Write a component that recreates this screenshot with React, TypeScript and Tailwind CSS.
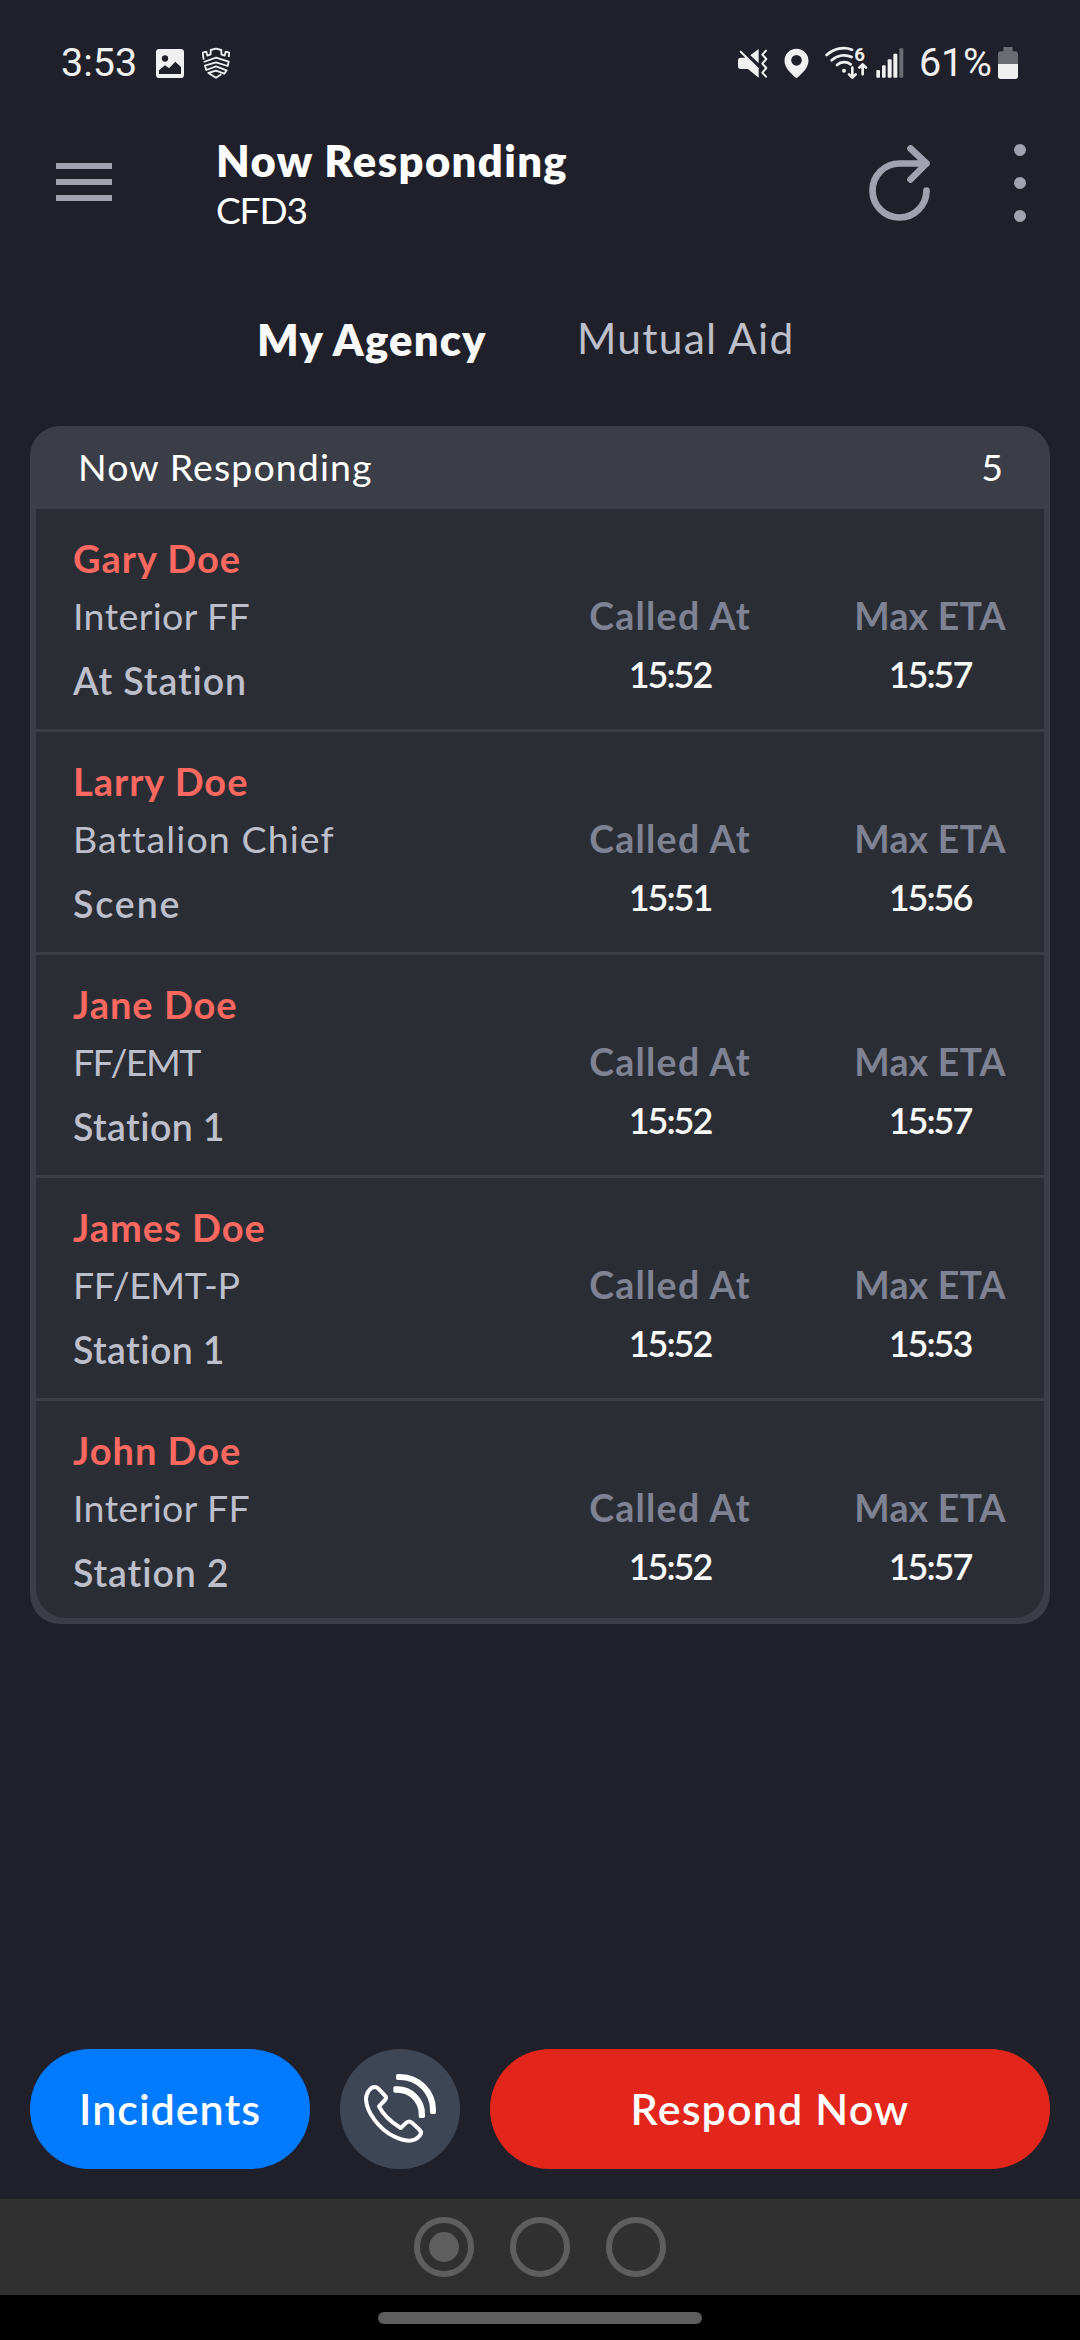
interface IResponder {
  name: string
  role: string
  place: string
  calledAt: string
  maxEta: string
  roleClass?: string
  placeClass?: string
}

const responders: IResponder[] = [
  { name: 'Gary Doe', role: 'Interior FF', place: 'At Station', calledAt: '15:52', maxEta: '15:57' },
  {
    name: 'Larry Doe',
    role: 'Battalion Chief',
    place: 'Scene',
    calledAt: '15:51',
    maxEta: '15:56',
    roleClass: 'tracking-[1.1px]',
    placeClass: 'tracking-[1.9px]'
  },
  {
    name: 'Jane Doe',
    role: 'FF/EMT',
    place: 'Station 1',
    calledAt: '15:52',
    maxEta: '15:57',
    roleClass: 'tracking-[-1.6px]',
    placeClass: 'tracking-[0.4px]'
  },
  {
    name: 'James Doe',
    role: 'FF/EMT-P',
    place: 'Station 1',
    calledAt: '15:52',
    maxEta: '15:53',
    roleClass: 'tracking-[-0.5px]',
    placeClass: 'tracking-[0.4px]'
  },
  { name: 'John Doe', role: 'Interior FF', place: 'Station 2', calledAt: '15:52', maxEta: '15:57' }
]

const StatusBar = () => (
  <div className="flex h-[126px] shrink-0 items-center pr-[62px] pl-[61px] font-['Roboto',sans-serif] text-[39.5px] text-[#f0f0f0]">
    <div className="w-[95px] whitespace-nowrap">3:53</div>
    <svg className="h-[29px] w-7" viewBox="348 58 84 87">
      <path
        fill="#f0f0f0"
        fillRule="evenodd"
        d="M358 58H422Q432 58 432 68V135Q432 145 422 145H358Q348 145 348 135V68Q348 58 358 58ZM375 77A9.5 9.5 0 1 0 375 96A9.5 9.5 0 1 0 375 77ZM357 133H423V112L406 96L387 116L375 107L357 122Z"
      />
    </svg>
    <svg className="ml-[18px] h-8 w-7" viewBox="486 54 84 96">
      <path
        fill="none"
        stroke="#f0f0f0"
        strokeWidth="5.500"
        strokeLinejoin="round"
        d="M491 92L488 71L499 68L502 80L512 76V63L528 59L544 63V76L554 80L557 68L568 71L566 84M491 99L528 86L566 98L563 111L528 100L495 110L499 123L528 112L560 124L553 134L528 125L505 132L528 146L544 136"
      />
    </svg>

    <svg className="ml-auto h-[31px] w-[30px]" viewBox="54 55 90 93">
      <path fill="#f0f0f0" d="M62 84H78L116 120V144L84 118H62Q54 118 54 110V92Q54 84 62 84ZM91 77L116 58V101Z" />
      <path fill="none" stroke="#f0f0f0" strokeWidth="6" strokeLinecap="round" d="M62 66L114 117" />
      <path
        fill="none"
        stroke="#f0f0f0"
        strokeWidth="6"
        strokeLinecap="round"
        strokeLinejoin="round"
        d="M138 63L127 75L139 88L127 102L139 115L127 129L138 141"
      />
    </svg>
    <svg className="ml-4 h-[31px] w-[25px]" viewBox="190.500 55 75 93">
      <path
        fill="#f0f0f0"
        fillRule="evenodd"
        d="M228 57C208 57 192 73 192 93C192 115 213 133 228 146C243 133 264 115 264 93C264 73 248 57 228 57ZM228 76A16 16 0 1 1 228 108A16 16 0 1 1 228 76Z"
      />
    </svg>
    <svg className="ml-4 h-[46px] w-[43px]" viewBox="315 34 129 138">
      <g fill="none" stroke="#f0f0f0" strokeWidth="8" strokeLinecap="round" strokeLinejoin="round">
        <path d="M320 79C342 58 372 54 396 63" />
        <path d="M335 95C352 79 376 76 395 85" />
        <path d="M351 109C363 98 380 98 392 107" />
        <path d="M397 117V146M387 137L397 147L407 137" />
        <path d="M428 137V108M418 117L428 107L438 117" />
      </g>
      <circle cx="372" cy="126" r="6" fill="#f0f0f0" />
      <text x="403" y="97" fill="#f0f0f0" fontSize="56" fontWeight="700">
        6
      </text>
    </svg>
    <svg className="ml-2 h-[30px] w-7" viewBox="470 56 84 90">
      <g fill="#f0f0f0">
        <rect x="471" y="122" width="11" height="23" rx="3" />
        <rect x="488" y="108" width="11" height="37" rx="3" />
        <rect x="505" y="90" width="12" height="55" rx="3" />
        <rect x="522" y="73" width="12" height="72" rx="3" />
      </g>
      <rect x="540" y="57" width="12" height="88" rx="3" fill="#6b6b72" />
    </svg>
    <div className="ml-[15px] w-[79px] tracking-[-0.2px] whitespace-nowrap">61%</div>
    <svg className="h-8 w-5" viewBox="834 51 60 96">
      <path fill="#6b6b72" d="M850 51H878V64H886Q894 64 894 72V102H834V72Q834 64 842 64H850Z" />
      <path fill="#f0f0f0" d="M834 102H894V139Q894 147 886 147H842Q834 147 834 139Z" />
    </svg>
  </div>
)

const Header = () => (
  <div className="flex h-[120px] shrink-0 items-start pr-[54px] pl-14">
    <div className="mt-[37px] flex w-14 flex-col gap-2.5">
      <div className="h-1.5 bg-[#a0a2b0]"></div>
      <div className="h-1.5 bg-[#a0a2b0]"></div>
      <div className="h-1.5 bg-[#a0a2b0]"></div>
    </div>
    <div className="mt-2.5 ml-[104px] flex-1 text-white">
      <div className="text-[43.5px] leading-[48px] font-extrabold tracking-[1.4px]">Now Responding</div>
      <div className="text-[37px] leading-[52px] tracking-[-1.1px]">CFD3</div>
    </div>
    <svg className="mt-[15px] h-[84px] w-[66px]" viewBox="0 0 66 84">
      <path
        fill="none"
        stroke="#a0a2b0"
        strokeWidth="6.700"
        strokeLinecap="round"
        strokeLinejoin="round"
        d="M59.500 49.500A27 27 0 1 1 32.500 22.500H59.500M43.500 7.500L59.500 22.500L43.500 38.500"
      />
    </svg>
    <div className="mt-[18px] ml-[81px] flex w-3 flex-col gap-[21px]">
      <div className="h-3 w-3 rounded-full bg-[#a0a2b0]"></div>
      <div className="h-3 w-3 rounded-full bg-[#a0a2b0]"></div>
      <div className="h-3 w-3 rounded-full bg-[#a0a2b0]"></div>
    </div>
  </div>
)

const Tabs = () => (
  <div className="flex h-[180px] shrink-0 items-start pt-[68px] pl-[257px] leading-[50px]">
    <div className="w-80 text-[43.5px] font-extrabold tracking-[1.2px] text-[#f8f8f8]">My Agency</div>
    <div className="-mt-px text-[42.5px] tracking-[1.25px] text-[#bdbfca]">Mutual Aid</div>
  </div>
)

const ResponderRow = ({ item }: { item: IResponder }) => (
  <div className="flex h-[223px] border-b-[3px] border-[#3c3e47] pt-5 pl-[37px] text-[37.5px] leading-[58px] whitespace-nowrap last:h-[217px] last:border-b-0">
    <div className="flex-1 text-[#bdbfca]">
      <div className="text-[38px] font-bold tracking-[1px] text-[#fa6860]">{item.name}</div>
      <div className={item.roleClass || 'tracking-[0.4px]'}>{item.role}</div>
      <div className={`mt-[7px] font-semibold ${item.placeClass || 'tracking-[0.9px]'}`}>{item.place}</div>
    </div>
    <div className="w-[292px] pt-[58px] text-center">
      <div className="font-bold tracking-[1.25px] text-[#7f8293]">Called At</div>
      <div className="text-[36px] font-semibold tracking-[-2px] text-[#f8f8f8]">{item.calledAt}</div>
    </div>
    <div className="w-[228px] pt-[58px] text-center">
      <div className="font-bold tracking-[0.2px] text-[#7f8293]">Max ETA</div>
      <div className="text-[36px] font-semibold tracking-[-2px] text-[#f8f8f8]">{item.maxEta}</div>
    </div>
  </div>
)

const ResponderCard = () => (
  <div className="mx-[30px] overflow-hidden rounded-[30px] bg-[#3c3e47] px-1.5 pb-1.5">
    <div className="flex h-[83px] items-center justify-between pr-[41px] pl-[42px] text-[37.5px] text-white">
      <div className="tracking-[1.1px]">Now Responding</div>
      <div>{responders.length}</div>
    </div>
    <div className="overflow-hidden rounded-b-[30px] bg-[#2b2d35]">
      {responders.map((item) => (
        <ResponderRow key={item.name} item={item} />
      ))}
    </div>
  </div>
)

const Actions = () => (
  <div className="mt-auto flex shrink-0 gap-[30px] px-[30px] pb-[30px] text-[43px] font-semibold text-white">
    <button className="h-[120px] w-[280px] rounded-full bg-[#007aff] tracking-[1px]">Incidents</button>
    <button className="h-[120px] w-[120px] rounded-full bg-[#3e4655]">
      <svg className="h-[120px] w-[120px]" viewBox="960 57 360 360">
        <path
          fill="none"
          stroke="#fff"
          strokeWidth="12"
          strokeLinejoin="round"
          d="M1038 208C1038 188 1052 171 1064 171Q1070 171 1075 176L1095 197Q1101 204 1095 210L1077 229Q1094 264 1142 294L1159 278Q1168 271 1176 278L1199 300Q1207 308 1199 317C1183 336 1155 336 1121 319C1075 295 1040 246 1038 208Z"
        />
        <g fill="#fff" stroke="#fff" strokeWidth="10" strokeLinejoin="round">
          <path d="M1125 174H1132A78 78 0 0 1 1210 252V259H1201V252A69 69 0 0 0 1132 183H1125Z" />
          <path d="M1133 137H1140A103 103 0 0 1 1243 240V247H1235V240A95 95 0 0 0 1140 145H1133Z" />
        </g>
      </svg>
    </button>
    <button className="h-[120px] flex-1 rounded-full bg-[#e2261c] tracking-[1.15px]">Respond Now</button>
  </div>
)

const PageDots = () => (
  <div className="flex h-24 shrink-0 items-center justify-center gap-9 bg-[#303030]">
    <div className="flex h-[60px] w-[60px] items-center justify-center rounded-full border-6 border-[#5e5e5e]">
      <div className="h-[30px] w-[30px] rounded-full bg-[#5e5e5e]"></div>
    </div>
    <div className="h-[60px] w-[60px] rounded-full border-6 border-[#5e5e5e]"></div>
    <div className="h-[60px] w-[60px] rounded-full border-6 border-[#5e5e5e]"></div>
  </div>
)

const App = () => {
  return (
    <div className="flex h-[2340px] w-[1080px] flex-col overflow-hidden bg-[#20202a] font-['Lato',sans-serif]">
      <StatusBar />
      <Header />
      <Tabs />
      <ResponderCard />
      <Actions />
      <PageDots />
      <div className="flex h-[45px] shrink-0 justify-center bg-black pt-[17px]">
        <div className="h-3 w-[324px] rounded-full bg-[#5e5e5e]"></div>
      </div>
    </div>
  )
}

export default App
